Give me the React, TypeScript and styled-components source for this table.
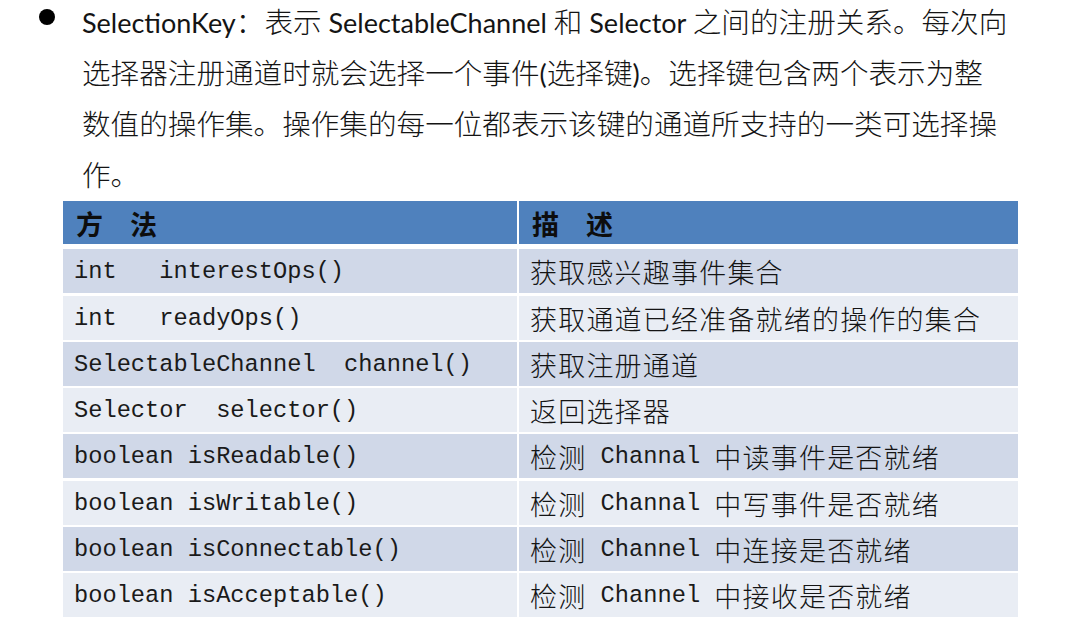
import React from "react";
import styled, { createGlobalStyle } from "styled-components";

const GlobalStyle = createGlobalStyle`
  html, body {
    margin: 0;
    padding: 0;
    background: #ffffff;
  }
  body {
    font-family: "Noto Sans CJK SC", sans-serif;
    color: #111111;
  }
`;

const Page = styled.div`
  width: 1083px;
  height: 618px;
  padding-top: 3px;
  box-sizing: border-box;
  overflow: hidden;
  background: #ffffff;
`;

const Item = styled.div`
  display: flex;
  align-items: flex-start;
  gap: 27px;
  padding-left: 39px;
`;

const Bullet = styled.span`
  flex: none;
  width: 16px;
  height: 16px;
  margin-top: 6px;
  border-radius: 50%;
  background: #000000;
`;

const Lines = styled.div`
  display: flex;
  flex-direction: column;
  gap: 15px;
`;

const Line = styled.div`
  height: 36px;
  line-height: 36px;
  white-space: pre;
  color: #141414;
`;

const ParaHan = styled.span`
  display: inline-block;
  height: 36px;
  line-height: 36px;
  font-family: "Noto Sans CJK SC", sans-serif;
  font-weight: 300;
  font-size: 28.6px;
`;

const ParaLatin = styled.span`
  display: inline-block;
  height: 36px;
  line-height: 36px;
  font-family: "Lato", "Noto Sans CJK SC", sans-serif;
  font-weight: 400;
  font-size: 27px;
`;

const Table = styled.div`
  display: flex;
  flex-direction: column;
  gap: 2.25px;
  width: 955px;
  margin: 9px 0 0 63px;
`;

const Row = styled.div<{ $tone: "head" | "dark" | "light" }>`
  display: grid;
  grid-template-columns: 454px 499px;
  column-gap: 2px;
  height: ${(p) => (p.$tone === "head" ? "43px" : "44px")};
  margin-bottom: ${(p) => (p.$tone === "head" ? "3px" : "0")};
`;

const Cell = styled.div<{ $tone: "head" | "dark" | "light" }>`
  display: flex;
  align-items: center;
  padding-left: ${(p) => (p.$tone === "head" ? "13px" : "11px")};
  padding-top: ${(p) => (p.$tone === "head" ? "2px" : "1px")};
  box-sizing: border-box;
  white-space: pre;
  overflow: hidden;
  color: #151515;
  background: ${(p) =>
    p.$tone === "head" ? "#4f81bd" : p.$tone === "dark" ? "#d0d8e8" : "#e9edf4"};
`;

const HeadText = styled.span`
  font-family: "Noto Sans CJK SC", sans-serif;
  font-weight: 700;
  font-size: 27px;
  color: #0d0d0d;
`;

const CodeLatin = styled.span`
  font-family: "Liberation Mono", monospace;
  font-size: 23.7px;
  color: #1a1a1a;
`;

const CodeHan = styled.span`
  font-family: "Noto Sans CJK SC", sans-serif;
  font-weight: 300;
  font-size: 27px;
  letter-spacing: 1.2px;
  color: #141414;
`;

const splitRuns = (text: string) => text.match(/[\x00-\x7F]+|[^\x00-\x7F]+/g) ?? [];
const isAscii = (s: string) => /^[\x00-\x7F]+$/.test(s);

const ParaText = ({ text }: { text: string }) => (
  <>
    {splitRuns(text).map((run, i) =>
      isAscii(run) ? <ParaLatin key={i}>{run}</ParaLatin> : <ParaHan key={i}>{run}</ParaHan>
    )}
  </>
);

const CellText = ({ text }: { text: string }) => (
  <>
    {splitRuns(text).map((run, i) =>
      isAscii(run) ? <CodeLatin key={i}>{run}</CodeLatin> : <CodeHan key={i}>{run}</CodeHan>
    )}
  </>
);

const paragraph = [
  "SelectionKey：表示 SelectableChannel 和 Selector 之间的注册关系。每次向",
  "选择器注册通道时就会选择一个事件(选择键)。选择键包含两个表示为整",
  "数值的操作集。操作集的每一位都表示该键的通道所支持的一类可选择操",
  "作。",
];

const rows: [string, string][] = [
  ["int   interestOps()", "获取感兴趣事件集合"],
  ["int   readyOps()", "获取通道已经准备就绪的操作的集合"],
  ["SelectableChannel  channel()", "获取注册通道"],
  ["Selector  selector()", "返回选择器"],
  ["boolean isReadable()", "检测 Channal 中读事件是否就绪"],
  ["boolean isWritable()", "检测 Channal 中写事件是否就绪"],
  ["boolean isConnectable()", "检测 Channel 中连接是否就绪"],
  ["boolean isAcceptable()", "检测 Channel 中接收是否就绪"],
];

export default function App() {
  return (
    <Page>
      <GlobalStyle />
      <Item>
        <Bullet />
        <Lines>
          {paragraph.map((l, i) => (
            <Line key={i}>
              <ParaText text={l} />
            </Line>
          ))}
        </Lines>
      </Item>
      <Table>
        <Row $tone="head">
          <Cell $tone="head">
            <HeadText>方　法</HeadText>
          </Cell>
          <Cell $tone="head">
            <HeadText>描　述</HeadText>
          </Cell>
        </Row>
        {rows.map(([method, desc], i) => {
          const tone = i % 2 === 0 ? "dark" : "light";
          return (
            <Row key={i} $tone={tone}>
              <Cell $tone={tone}>
                <CellText text={method} />
              </Cell>
              <Cell $tone={tone}>
                <CellText text={desc} />
              </Cell>
            </Row>
          );
        })}
      </Table>
    </Page>
  );
}
